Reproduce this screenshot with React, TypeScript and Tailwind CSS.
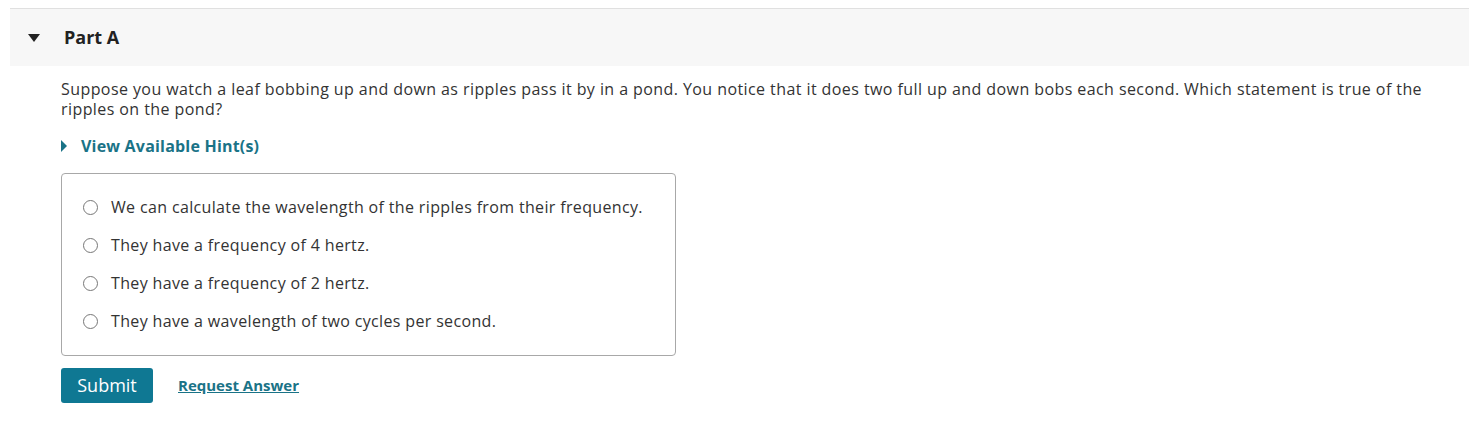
import { useState } from "react";

const options = [
  "We can calculate the wavelength of the ripples from their frequency.",
  "They have a frequency of 4 hertz.",
  "They have a frequency of 2 hertz.",
  "They have a wavelength of two cycles per second.",
];

export default function App() {
  const [picked, setPicked] = useState<number | null>(null);

  return (
    <div
      className="min-h-screen bg-white text-[#333] pt-2"
      style={{ fontFamily: '"Open Sans", "Noto Sans", Arial, sans-serif' }}
    >
      <section className="ml-[10px] mr-[13px] border-t border-[#e0e0e0]">
        {/* Part header */}
        <div className="flex h-[57px] items-center bg-[#f7f7f7]">
          <svg className="ml-[18px] mr-[24px] h-[8px] w-[12px]" viewBox="0 0 12 8">
            <path d="M0 0h12L6 8z" fill="#222" />
          </svg>
          <h2 className="text-[18px] font-bold text-[#222]">Part A</h2>
        </div>

        <div className="pl-[51px] pr-[37px]">
          <p className="mt-[13px] text-[16px] leading-[20px] tracking-[0.42px]">
            Suppose you watch a leaf bobbing up and down as ripples pass it by in a pond. You notice that it does two full up and down bobs each second. Which statement is true of the ripples on the pond?
          </p>

          {/* Hints */}
          <button className="mt-[15px] flex items-center text-[16px] font-bold tracking-[0.2px] text-[#1a7387]">
            <svg className="mr-[14px] h-[12px] w-[6px]" viewBox="0 0 6 12">
              <path d="M0 0l6 6-6 6z" fill="#1a7387" />
            </svg>
            View Available Hint(s)
          </button>

          {/* Options */}
          <div className="mt-[15px] w-[615px] rounded-[4px] border border-[#a8a8a8] px-[21px] pt-[14px] pb-[15px]">
            {options.map((o, i) => (
              <label key={i} className="flex h-[38px] cursor-pointer items-center" onClick={() => setPicked(i)}>
                <span className="flex h-[15px] w-[15px] items-center justify-center rounded-full border border-[#777] bg-white">
                  {picked === i && <span className="h-[7px] w-[7px] rounded-full bg-[#1a7387]" />}
                </span>
                <span className="ml-[13px] text-[16px] tracking-[0.35px]">{o}</span>
              </label>
            ))}
          </div>

          {/* Actions */}
          <div className="mt-[12px] flex items-center">
            <button className="h-[35px] w-[92px] rounded-[3px] bg-[#0f7893] text-[18px] text-white">
              Submit
            </button>
            <a href="#" className="ml-[25px] text-[15px] font-bold text-[#1a7387] underline">
              Request Answer
            </a>
          </div>
        </div>
      </section>
    </div>
  );
}
